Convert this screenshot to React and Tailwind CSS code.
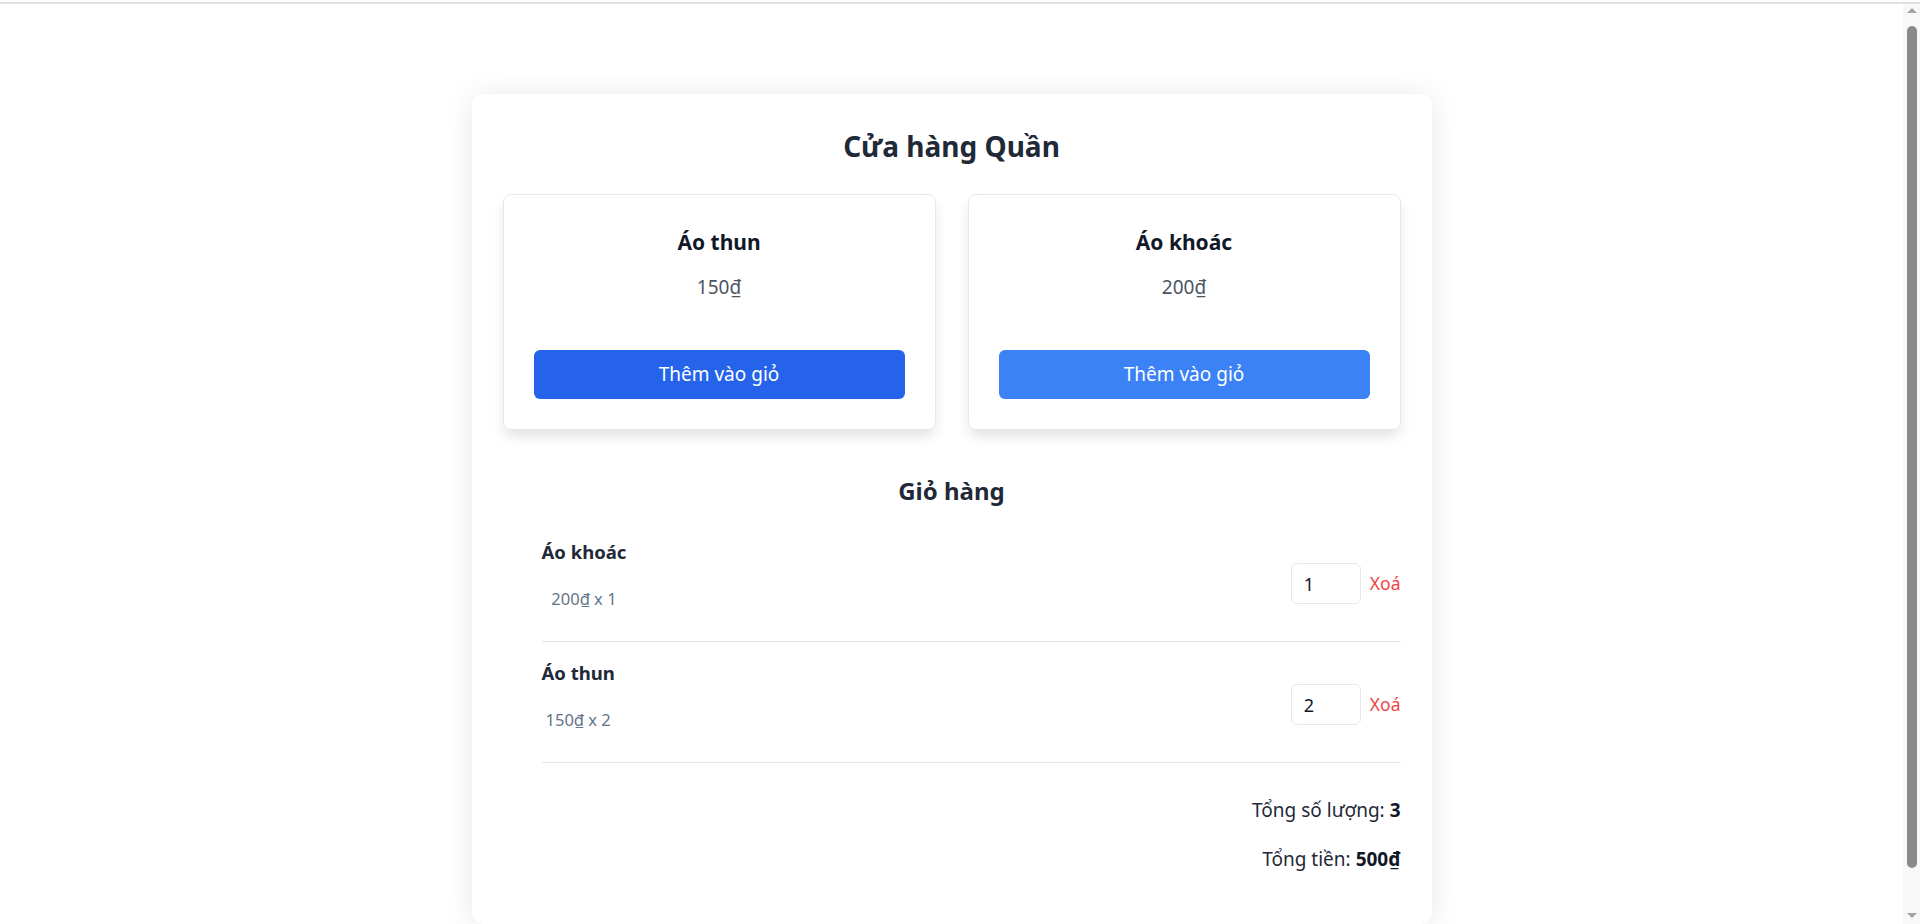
import { useState } from "react";

const products = [
  { id: 1, name: "Áo thun", price: 150 },
  { id: 2, name: "Áo khoác", price: 200 },
];

export default function App() {
  const [cart, setCart] = useState([
    { id: 2, name: "Áo khoác", price: 200, qty: 1 },
    { id: 1, name: "Áo thun", price: 150, qty: 2 },
  ]);

  /* ================= CART ACTIONS ================= */
  const addToCart = (p) => {
    setCart((prev) => {
      const found = prev.find((i) => i.id === p.id);
      if (found) {
        return prev.map((i) => (i.id === p.id ? { ...i, qty: i.qty + 1 } : i));
      }
      return [...prev, { ...p, qty: 1 }];
    });
  };

  const changeQty = (id, value) => {
    const qty = Math.max(1, parseInt(value) || 1);
    setCart((prev) => prev.map((i) => (i.id === id ? { ...i, qty } : i)));
  };

  const removeItem = (id) => setCart((prev) => prev.filter((i) => i.id !== id));

  const totalQty = cart.reduce((s, i) => s + i.qty, 0);
  const totalPrice = cart.reduce((s, i) => s + i.qty * i.price, 0);

  return (
    <div className="min-h-screen bg-white font-['Noto_Sans','Open_Sans',sans-serif] text-[#1f2937]">
      <div className="h-[2px]" />
      <div className="h-[2px] bg-[#e0e0e0]" />

      {/* fake window scrollbar */}
      <div className="fixed right-0 top-[4px] bottom-0 w-[17px] bg-[#f8f8f8] flex flex-col items-center">
        <div className="mt-[4px] w-0 h-0 border-l-[5px] border-r-[5px] border-b-[5px] border-l-transparent border-r-transparent border-b-[#a3a3a3]" />
        <div className="mt-[13px] w-[10px] h-[842px] rounded-full bg-[#8a8a8a]" />
        <div className="mt-auto mb-[6px] w-0 h-0 border-l-[5px] border-r-[5px] border-t-[5px] border-l-transparent border-r-transparent border-t-[#a3a3a3]" />
      </div>

      <div className="mr-[17px] pt-[90px] pb-[44px]">
        <div className="w-[960px] mx-auto bg-white rounded-xl shadow-[0_2px_30px_rgba(0,0,0,0.1)] px-[31px] pt-[34px] pb-[51px]">
          <h1 className="text-center text-[28px] leading-[36px] font-bold text-[#1f2937]">
            Cửa hàng Quần
          </h1>

          {/* PRODUCTS */}
          <div className="grid grid-cols-2 gap-[32px] mt-[30px]">
            {products.map((p, idx) => (
              <div
                key={p.id}
                className="border border-[#e5e7eb] rounded-lg shadow-[0_8px_14px_-2px_rgba(0,0,0,0.12)] p-[30px] text-center"
              >
                <h3 className="mt-[3px] text-[21px] leading-[28px] font-bold text-[#111827]">
                  {p.name}
                </h3>
                <p className="mt-[19px] text-[19px] leading-[24px] text-[#4b5563]">
                  {p.price}₫
                </p>
                <button
                  onClick={() => addToCart(p)}
                  className={`mt-[51px] w-full h-[49px] rounded-md text-white text-[19px] ${
                    idx === 0 ? "bg-[#2563eb]" : "bg-[#3b82f6]"
                  }`}
                >
                  Thêm vào giỏ
                </button>
              </div>
            ))}
          </div>

          {/* CART */}
          <h2 className="mt-[45px] text-center text-[24px] leading-[32px] font-bold text-[#1f2937]">
            Giỏ hàng
          </h2>

          <div className="mt-[14px] pl-[39px]">
            {cart.map((item) => (
              <div
                key={item.id}
                className="flex justify-between h-[121px] border-b border-[#e5e7eb]"
              >
                <div className="flex flex-col items-center pt-[19px]">
                  <h4 className="text-[18.5px] leading-[24px] font-bold text-[#1f2937]">
                    {item.name}
                  </h4>
                  <p className="mt-[23px] text-[16.5px] leading-[24px] text-[#64748b]">
                    {item.price}₫ x {item.qty}
                  </p>
                </div>
                <div className="flex items-start gap-[9px] pt-[42px]">
                  <input
                    type="number"
                    value={item.qty}
                    onChange={(e) => changeQty(item.id, e.target.value)}
                    className="w-[70px] h-[41px] border border-[#e5e7eb] rounded-md px-[12px] text-[18px] text-[#111827] outline-none [appearance:textfield] [&::-webkit-inner-spin-button]:appearance-none"
                  />
                  <button
                    onClick={() => removeItem(item.id)}
                    className="h-[41px] text-[17.5px] text-[#ef4444]"
                  >
                    Xoá
                  </button>
                </div>
              </div>
            ))}

            <div className="text-right text-[19px] leading-[28px] text-[#1f2937]">
              <p className="mt-[33px]">
                Tổng số lượng: <strong className="text-[#111827]">{totalQty}</strong>
              </p>
              <p className="mt-[21px]">
                Tổng tiền: <strong className="text-[#111827]">{totalPrice}₫</strong>
              </p>
            </div>
          </div>
        </div>
      </div>
    </div>
  );
}
